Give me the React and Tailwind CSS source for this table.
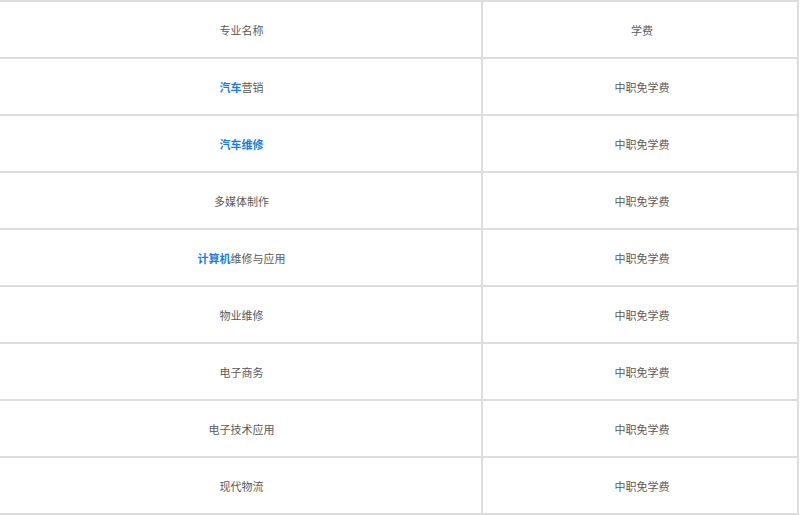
export default function App() {
  const rows = [
    { blue: "汽车", rest: "营销" },
    { blue: "汽车维修", rest: "" },
    { blue: "", rest: "多媒体制作" },
    { blue: "计算机", rest: "维修与应用" },
    { blue: "", rest: "物业维修" },
    { blue: "", rest: "电子商务" },
    { blue: "", rest: "电子技术应用" },
    { blue: "", rest: "现代物流" },
  ];

  return (
    <div className="w-[799px] bg-white text-[11px] text-[#5a5a5a] font-['Microsoft_YaHei','Noto_Sans_CJK_SC',sans-serif]">
      <div className="border-b-2 border-[#ddd]">
        {/* header */}
        <div className="flex h-[57px] border-t-2 border-[#ddd]">
          <div className="w-[481px] pl-[2px] pt-[2px] flex items-center justify-center">专业名称</div>
          <div className="flex-1 pl-[4px] pt-[2px] flex items-center justify-center border-l-2 border-r-2 border-[#ddd]">学费</div>
        </div>
        {rows.map((r, i) => (
          <div key={i} className="flex h-[57px] border-t-2 border-[#ddd]">
            <div className="w-[481px] pl-[2px] pt-[2px] flex items-center justify-center">
              {r.blue && <span className="font-bold text-[#1a7ee0]">{r.blue}</span>}
              {r.rest}
            </div>
            <div className="flex-1 pl-[4px] pt-[2px] flex items-center justify-center border-l-2 border-r-2 border-[#ddd]">中职免学费</div>
          </div>
        ))}
      </div>
    </div>
  );
}
